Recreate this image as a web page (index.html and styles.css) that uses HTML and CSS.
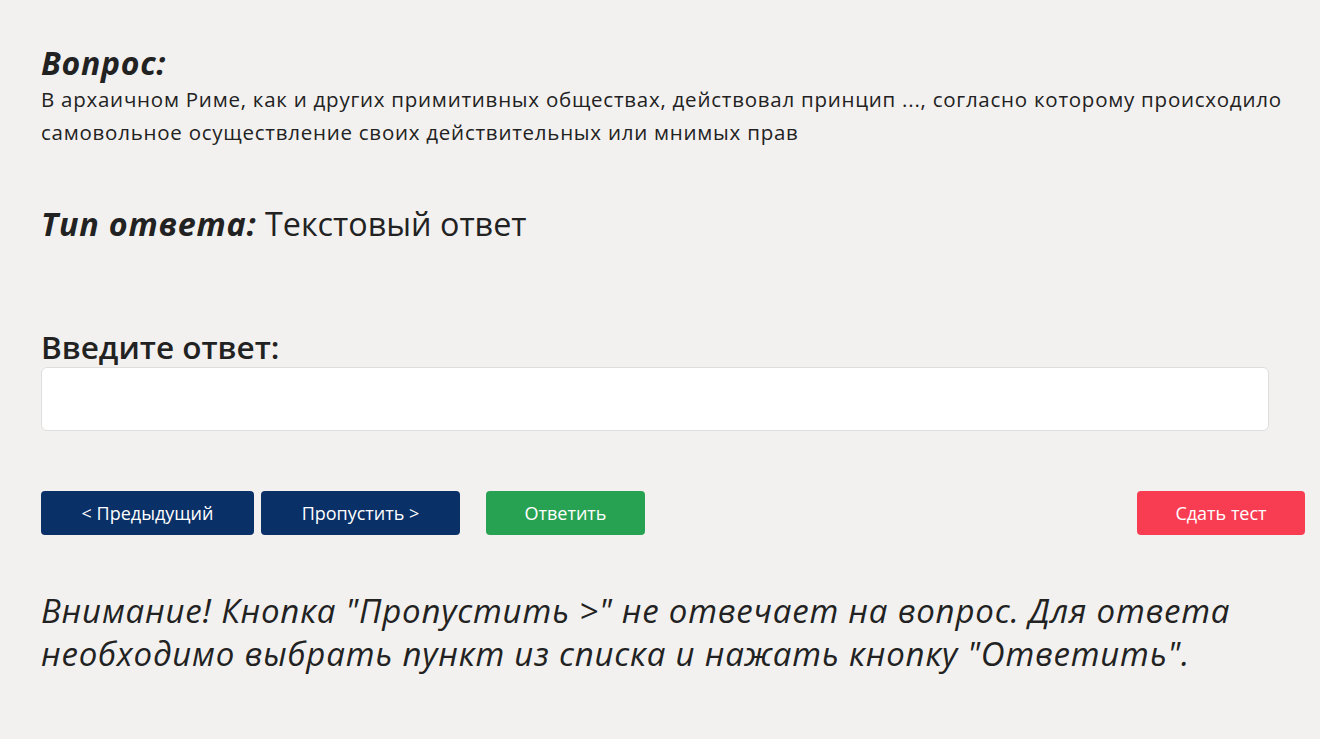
FILE: index.html
```html
<!DOCTYPE html>
<html lang="ru">
<head>
  <meta charset="UTF-8" />
  <meta name="viewport" content="width=device-width, initial-scale=1.0"/>
  <title>Тест</title>
  <link rel="stylesheet" href="styles.css">
</head>
<body>
  <section class="question">
    <h2 class="label">Вопрос:</h2>
    <p class="question-text">В архаичном Риме, как и других примитивных обществах, действовал принцип ..., согласно которому происходило самовольное осуществление своих действительных или мнимых прав</p>
  </section>

  <section class="answer-type">
    <span class="label">Тип ответа:</span> Текстовый ответ
  </section>

  <form class="answer-form" onsubmit="return false;">
    <label class="answer-label" for="answer">Введите ответ:</label>
    <input type="text" id="answer" class="answer-input" />

    <div class="actions">
      <button type="button" class="btn btn-nav btn-prev">&lt; Предыдущий</button>
      <button type="button" class="btn btn-nav btn-skip">Пропустить &gt;</button>
      <button type="submit" class="btn btn-answer">Ответить</button>
      <button type="button" class="btn btn-finish">Сдать тест</button>
    </div>
  </form>

  <p class="warning">Внимание! Кнопка "Пропустить &gt;" не отвечает на вопрос. Для ответа необходимо выбрать пункт из списка и нажать кнопку "Ответить".</p>
</body>
</html>
```

FILE: styles.css
```css
body {
  margin: 0;
  padding: 43px 15px 0 41px;
  background-color: #f2f1ef;
  color: #222;
  font-family: "Open Sans", "Noto Sans", sans-serif;
}

.label {
  font-style: italic;
  font-weight: bold;
}

.question h2 {
  margin: 0;
  font-size: 32px;
  line-height: 40px;
  letter-spacing: 0.7px;
}

.question-text {
  margin: 0;
  font-size: 20.5px;
  line-height: 33px;
  letter-spacing: 0.75px;
  max-width: 1250px;
}

.answer-type {
  margin-top: 52px;
  font-size: 32.3px;
  line-height: 44px;
}

.answer-type .label {
  letter-spacing: 0.8px;
}

.answer-form {
  margin-top: 82px;
}

.answer-label {
  display: block;
  font-size: 31.5px;
  font-weight: 600;
  line-height: 40px;
}

.answer-input {
  display: block;
  box-sizing: border-box;
  width: 1228px;
  height: 64px;
  margin: 0;
  border: 1px solid #dedede;
  border-radius: 6px;
  background-color: #fff;
  font-size: 20px;
  padding: 0 14px;
}

.actions {
  display: flex;
  gap: 7px;
  margin-top: 60px;
}

.btn {
  height: 44px;
  border: none;
  border-radius: 4px;
  color: #fff;
  font-family: "Open Sans", "Noto Sans", sans-serif;
  font-size: 18px;
  cursor: pointer;
}

.btn-nav {
  background-color: #0a3068;
}

.btn-prev {
  width: 213px;
}

.btn-skip {
  width: 199px;
}

.btn-answer {
  width: 159px;
  margin-left: 19px;
  background-color: #27a253;
}

.btn-finish {
  width: 168px;
  margin-left: auto;
  background-color: #f83d53;
}

.warning {
  margin: 54px 0 0;
  font-size: 33px;
  line-height: 43px;
  letter-spacing: 0.8px;
  font-style: italic;
  max-width: 1240px;
}
```
